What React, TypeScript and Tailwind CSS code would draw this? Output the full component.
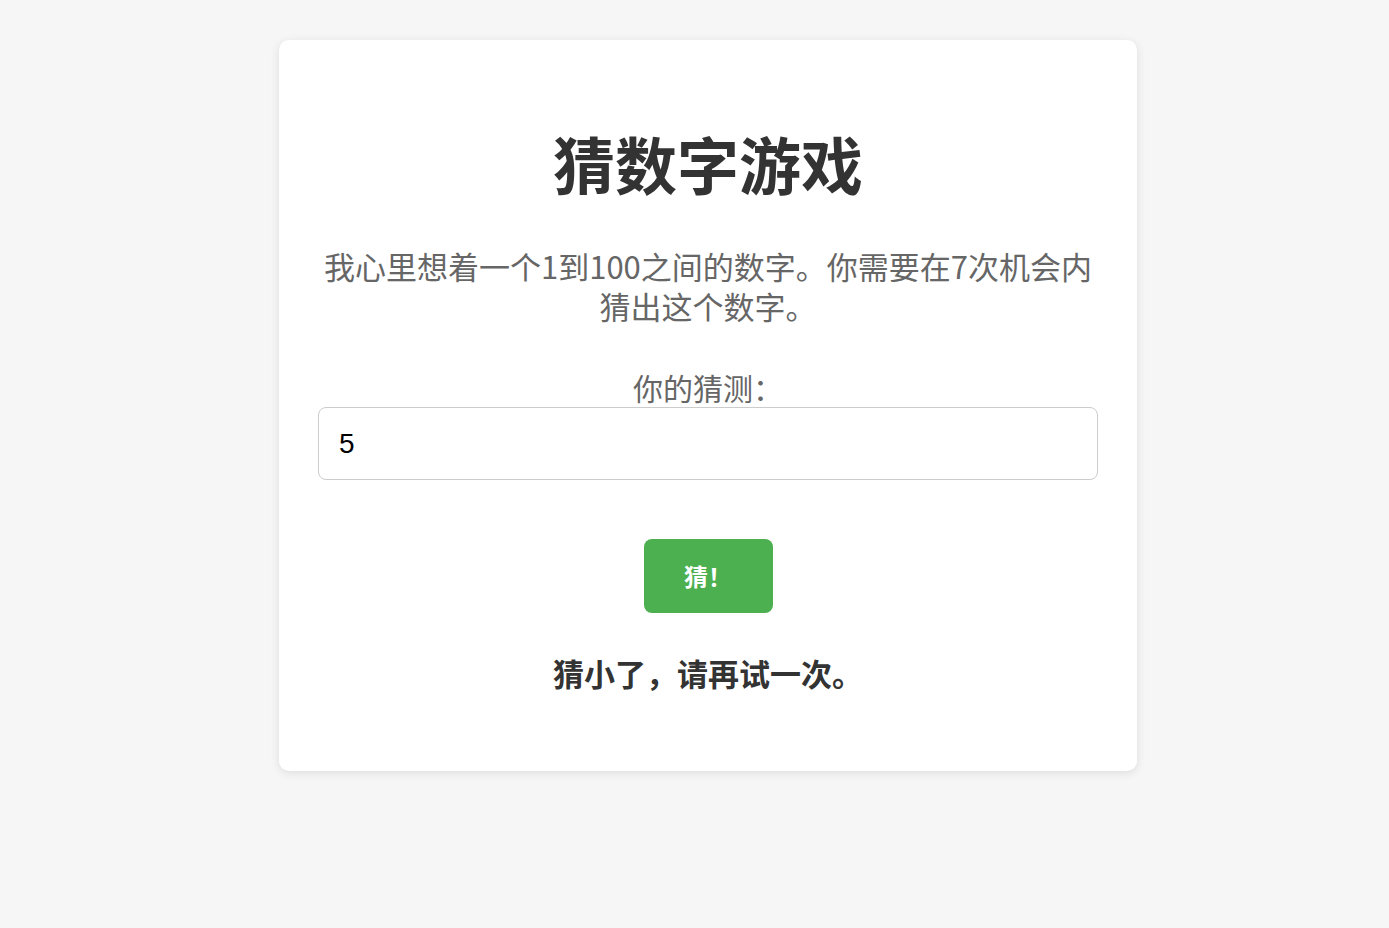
import React, { useState } from 'react';

const App: React.FC = () => {
  const [guess, setGuess] = useState('5');
  const [message] = useState('猜小了，请再试一次。');

  return (
    <div className="min-h-[928px] w-full bg-[#f6f6f6] pt-[40px] font-['Noto_Sans_CJK_SC',sans-serif]">
      <div className="ml-[279px] w-[858px] rounded-[10px] bg-white px-[39px] pt-[40px] pb-[78px] text-center shadow-[0_2px_10px_rgba(0,0,0,0.1)]">
        <h1 className="mt-[46px] text-[62px] leading-[74px] font-bold text-[#333]">猜数字游戏</h1>
        <p className="mt-[46px] text-[31px] leading-[40px] text-[#666]">
          我心里想着一个1到100之间的数字。你需要在7次机会内猜出这个数字。
        </p>
        <label htmlFor="guess" className="mt-[41px] block text-[30px] leading-[40px] text-[#666]">
          你的猜测：
        </label>
        <input
          id="guess"
          type="text"
          value={guess}
          onChange={e => setGuess(e.target.value)}
          className="block h-[73px] w-full rounded-[8px] border border-[#ccc] px-[20px] font-['Liberation_Sans',sans-serif] text-[28px] text-black outline-none"
        />
        <button className="mt-[59px] h-[74px] w-[129px] rounded-[8px] bg-[#4caf50] text-[24px] font-bold text-white">
          猜！
        </button>
        <div className="mt-[40px] text-[31px] leading-[40px] font-bold text-[#333]">{message}</div>
      </div>
    </div>
  );
};

export default App;
